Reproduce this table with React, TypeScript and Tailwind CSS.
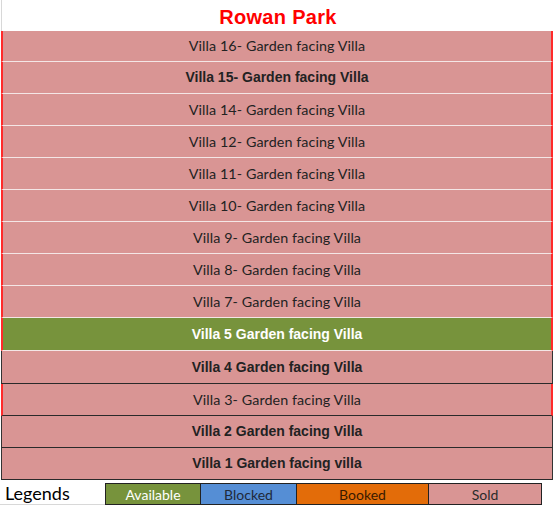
const rows = [
  { label: "Villa 16- Garden facing Villa", bold: false, tone: "sold", edge: "red", sep: "white", h: "h-[31px]" },
  { label: "Villa 15- Garden facing Villa", bold: true, tone: "sold", edge: "red", sep: "white", h: "h-[32px]" },
  { label: "Villa 14- Garden facing Villa", bold: false, tone: "sold", edge: "red", sep: "white", h: "h-[32px]" },
  { label: "Villa 12- Garden facing Villa", bold: false, tone: "sold", edge: "red", sep: "white", h: "h-[32px]" },
  { label: "Villa 11- Garden facing Villa", bold: false, tone: "sold", edge: "red", sep: "white", h: "h-[32px]" },
  { label: "Villa 10- Garden facing Villa", bold: false, tone: "sold", edge: "red", sep: "white", h: "h-[32px]" },
  { label: "Villa 9- Garden facing Villa", bold: false, tone: "sold", edge: "red", sep: "white", h: "h-[32px]" },
  { label: "Villa 8- Garden facing Villa", bold: false, tone: "sold", edge: "red", sep: "white", h: "h-[32px]" },
  { label: "Villa 7- Garden facing Villa", bold: false, tone: "sold", edge: "red", sep: "white", h: "h-[32px]" },
  { label: "Villa 5 Garden facing Villa", bold: true, tone: "available", edge: "red", sep: "white", h: "h-[33px]" },
  { label: "Villa 4 Garden facing Villa", bold: true, tone: "sold", edge: "dark", sep: "dark", h: "h-[33px]" },
  { label: "Villa 3- Garden facing Villa", bold: false, tone: "sold", edge: "red", sep: "dark", h: "h-[32px]" },
  { label: "Villa 2 Garden facing Villa", bold: true, tone: "sold", edge: "dark", sep: "dark", h: "h-[32px]" },
  { label: "Villa 1 Garden facing villa", bold: true, tone: "sold", edge: "dark", sep: "dark", h: "h-[32px]" },
];

const VillaRow = ({ row }: { row: (typeof rows)[number] }) => {
  const bg = row.tone === "available" ? "bg-[#77933c] text-white" : "bg-[#d99594] text-[#222222]";
  const edge = row.edge === "red" ? "border-x-2 border-x-[#ff2a2a]" : "border-x border-x-[#333333]";
  const sep = row.sep === "white" ? "border-b border-b-[#f4e6e6]" : "border-b border-b-[#2a2a2a]";
  const font = row.bold
    ? "font-bold font-['Liberation_Sans',Arial,sans-serif] text-[14px]"
    : "font-['Lato','Noto_Sans',sans-serif] text-[14.3px] tracking-[0.1px]";

  return (
    <div className={`${row.h} ${bg} ${edge} ${sep} flex items-center justify-center`}>
      <span className={font}>{row.label}</span>
    </div>
  );
};

const legends = [
  { label: "Available", cls: "w-[96px] bg-[#77933c] text-white" },
  { label: "Blocked", cls: "w-[97px] bg-[#558ed5] text-[#1f2a3a]" },
  { label: "Booked", cls: "w-[133px] bg-[#e36c09] text-[#3a1a00]" },
  { label: "Sold", cls: "w-[114px] bg-[#d99594] text-[#2b2b2b]" },
];

export default function App() {
  return (
    <div className="w-[554px] h-[507px] bg-white overflow-hidden">
      <div className="h-[31px] flex items-center justify-center border-l border-l-[#d8d8d8] ml-[1px]">
        <h1 className="text-[#ff0000] font-bold text-[20px] font-['Liberation_Sans',Arial,sans-serif] tracking-[0.3px] mt-[2px]">
          Rowan Park
        </h1>
      </div>
      <div className="ml-[1px] w-[552px]">
        {rows.map((row) => (
          <VillaRow key={row.label} row={row} />
        ))}
      </div>
      <div className="flex h-[26px] items-start pt-[3px]">
        <div className="w-[106px] h-[22px] pl-[5px] flex items-center border-b border-b-[#d8d8d8] text-[18px] text-black font-['Lato','Noto_Sans',sans-serif]">
          Legends
        </div>
        {legends.map((l) => (
          <div
            key={l.label}
            className={`${l.cls} h-[22px] border border-[#222222] -ml-px first:ml-0 flex items-center justify-center text-[14px] font-['Lato','Noto_Sans',sans-serif]`}
          >
            {l.label}
          </div>
        ))}
      </div>
    </div>
  );
}
